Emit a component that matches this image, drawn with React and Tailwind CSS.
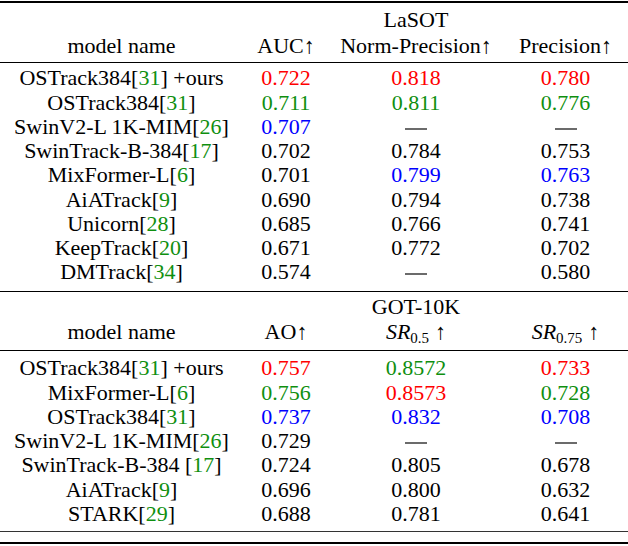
import React from "react";

const tone = {
  r: "text-[#ff0000]",
  g: "text-[#0f8f0f]",
  b: "text-[#0000ff]",
  k: "text-black",
};

const lasotRows = [
  { name: "OSTrack384", ref: "31", tail: " +ours", vals: [["0.722", "r"], ["0.818", "r"], ["0.780", "r"]] },
  { name: "OSTrack384", ref: "31", vals: [["0.711", "g"], ["0.811", "g"], ["0.776", "g"]] },
  { name: "SwinV2-L 1K-MIM", ref: "26", vals: [["0.707", "b"], null, null] },
  { name: "SwinTrack-B-384", ref: "17", vals: [["0.702", "k"], ["0.784", "k"], ["0.753", "k"]] },
  { name: "MixFormer-L", ref: "6", vals: [["0.701", "k"], ["0.799", "b"], ["0.763", "b"]] },
  { name: "AiATrack", ref: "9", vals: [["0.690", "k"], ["0.794", "k"], ["0.738", "k"]] },
  { name: "Unicorn", ref: "28", vals: [["0.685", "k"], ["0.766", "k"], ["0.741", "k"]] },
  { name: "KeepTrack", ref: "20", vals: [["0.671", "k"], ["0.772", "k"], ["0.702", "k"]] },
  { name: "DMTrack", ref: "34", vals: [["0.574", "k"], null, ["0.580", "k"]] },
];

const gotRows = [
  { name: "OSTrack384", ref: "31", tail: " +ours", vals: [["0.757", "r"], ["0.8572", "g"], ["0.733", "r"]] },
  { name: "MixFormer-L", ref: "6", vals: [["0.756", "g"], ["0.8573", "r"], ["0.728", "g"]] },
  { name: "OSTrack384", ref: "31", vals: [["0.737", "b"], ["0.832", "b"], ["0.708", "b"]] },
  { name: "SwinV2-L 1K-MIM", ref: "26", vals: [["0.729", "k"], null, null] },
  { name: "SwinTrack-B-384 ", ref: "17", vals: [["0.724", "k"], ["0.805", "k"], ["0.678", "k"]] },
  { name: "AiATrack", ref: "9", vals: [["0.696", "k"], ["0.800", "k"], ["0.632", "k"]] },
  { name: "STARK", ref: "29", vals: [["0.688", "k"], ["0.781", "k"], ["0.641", "k"]] },
];

const cols = "grid grid-cols-[243px_86px_174px_125px] text-center";

function Dash() {
  return <span className="inline-block w-[22px] h-[2px] mb-[4px] bg-[#6b6b6b] align-baseline" />;
}

function Row({ row }) {
  return (
    <div className={`${cols} h-[24.25px] leading-[24.25px] whitespace-nowrap`}>
      <div>
        {row.name}[<span className={tone.g}>{row.ref}</span>]{row.tail}
      </div>
      {row.vals.map((v, i) => (
        <div key={i}>{v ? <span className={tone[v[1]]}>{v[0]}</span> : <Dash />}</div>
      ))}
    </div>
  );
}

function SR({ sub }) {
  return (
    <span>
      <span className="italic">SR</span>
      <span className="text-[15px] relative top-[4px]">{sub}</span>
      <span className="ml-[6px]">↑</span>
    </span>
  );
}

export default function App() {
  return (
    <div className="w-[628px] h-[546px] bg-white text-black text-[22px] font-['Liberation_Serif',serif]">
      <div className="h-[1px]" />
      <div className="h-[2px] bg-black" />

      {/* LaSOT block */}
      <div className="h-[4.5px]" />
      <div className={`${cols} h-[26px] leading-[24.25px]`}>
        <div />
        <div />
        <div>LaSOT</div>
        <div />
      </div>
      <div className={`${cols} h-[24.25px] leading-[24.25px] whitespace-nowrap`}>
        <div>model name</div>
        <div>AUC↑</div>
        <div>Norm-Precision↑</div>
        <div>Precision↑</div>
      </div>
      <div className="h-[3.75px]" />
      <div className="h-[1px] bg-black" />
      <div className="h-[3.9px]" />
      {lasotRows.map((r, i) => (
        <Row key={i} row={r} />
      ))}
      <div className="h-[6.5px]" />
      <div className="h-[1px] bg-black" />

      {/* GOT-10K block */}
      <div className="h-[3.35px]" />
      <div className={`${cols} h-[25px] leading-[24.25px]`}>
        <div />
        <div />
        <div>GOT-10K</div>
        <div />
      </div>
      <div className={`${cols} h-[24.25px] leading-[24.25px] whitespace-nowrap`}>
        <div>model name</div>
        <div>AO↑</div>
        <div>
          <SR sub="0.5" />
        </div>
        <div>
          <SR sub="0.75" />
        </div>
      </div>
      <div className="h-[5.5px]" />
      <div className="h-[1px] bg-black" />
      <div className="h-[5.25px]" />
      {gotRows.map((r, i) => (
        <Row key={i} row={r} />
      ))}
      <div className="h-[5px]" />
      <div className="h-[1px] bg-[#333]" />
      <div className="h-[10px]" />
      <div className="h-[2px] bg-black" />
    </div>
  );
}
